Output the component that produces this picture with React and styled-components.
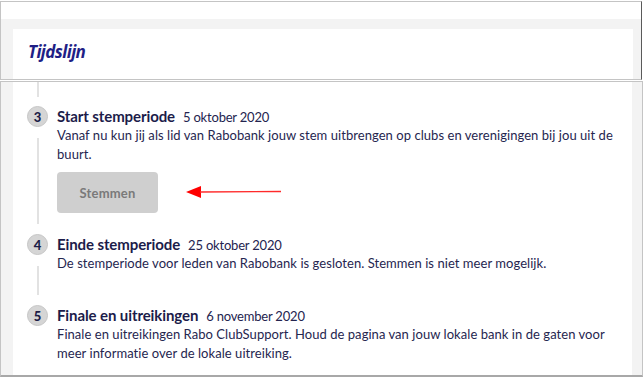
import styled, { createGlobalStyle } from "styled-components";

const GlobalStyle = createGlobalStyle`
  html, body {
    margin: 0;
    padding: 0;
    background: #ffffff;
  }
  body {
    font-family: Lato, "Open Sans", sans-serif;
    color: #24244f;
  }
`;

const steps = [
  {
    num: 3,
    title: "Start stemperiode",
    date: "5 oktober 2020",
    text: "Vanaf nu kun jij als lid van Rabobank jouw stem uitbrengen op clubs en verenigingen bij jou uit de buurt.",
    button: "Stemmen",
    spacing: 21,
  },
  {
    num: 4,
    title: "Einde stemperiode",
    date: "25 oktober 2020",
    text: "De stemperiode voor leden van Rabobank is gesloten. Stemmen is niet meer mogelijk.",
    spacing: 32,
  },
  {
    num: 5,
    title: "Finale en uitreikingen",
    date: "6 november 2020",
    text: "Finale en uitreikingen Rabo ClubSupport. Houd de pagina van jouw lokale bank in de gaten voor meer informatie over de lokale uitreiking.",
    spacing: 12,
    last: true,
  },
];

export default function App() {
  return (
    <>
      <GlobalStyle />
      <TopFrame>
        <WhiteStrip />
        <GreyArea>
          <HeaderCard>
            <Heading>Tijdslijn</Heading>
          </HeaderCard>
        </GreyArea>
      </TopFrame>
      <BottomFrame>
        <TimelineCard>
          <TopLine />
          {steps.map((step) => (
            <Step key={step.num} step={step} />
          ))}
        </TimelineCard>
      </BottomFrame>
    </>
  );
}

const Step = ({ step }) => {
  return (
    <StepRow>
      <Rail>
        <Badge>{step.num}</Badge>
        {!step.last && <RailLine />}
      </Rail>
      <StepBody $spacing={step.spacing}>
        <StepHead>
          <StepTitle>{step.title}</StepTitle>
          <StepDate>{step.date}</StepDate>
        </StepHead>
        <StepText>{step.text}</StepText>
        {step.button && (
          <ButtonRow>
            <VoteButton disabled>{step.button}</VoteButton>
            <Arrow width="96" height="14" viewBox="0 0 96 14">
              <path d="M0 7 L15 1 L15 13 Z" fill="#ff0000" />
              <line x1="14" y1="7" x2="95" y2="6.5" stroke="#ff2a2a" strokeWidth="1.4" />
            </Arrow>
          </ButtonRow>
        )}
      </StepBody>
    </StepRow>
  );
};

const TopFrame = styled.div`
  box-sizing: border-box;
  width: 642px;
  height: 79px;
  margin-top: 1px;
  border: 1px solid #c4c4c4;
  border-right: 1px solid #5a5a5a;
  display: flex;
  flex-direction: column;
  overflow: hidden;
`;

const WhiteStrip = styled.div`
  height: 17px;
  background: #ffffff;
`;

const GreyArea = styled.div`
  flex: 1;
  background: #f3f3f3;
  padding: 10px 8px 0 12px;
  display: flex;
`;

const HeaderCard = styled.div`
  flex: 1;
  background: #ffffff;
  padding: 12px 15px 0;
`;

const Heading = styled.h2`
  margin: 0;
  font-family: "Open Sans", Lato, sans-serif;
  font-size: 17px;
  line-height: 22px;
  font-style: italic;
  font-weight: 700;
  letter-spacing: -0.6px;
  color: #1f1f86;
`;

const BottomFrame = styled.div`
  box-sizing: border-box;
  width: 643px;
  margin-top: 1px;
  border: 1px solid #c4c4c4;
  border-bottom: 2px solid #a8a8a8;
  background: #f3f3f3;
  padding: 0 10px 0 12px;
  display: flex;
`;

const TimelineCard = styled.div`
  flex: 1;
  background: #ffffff;
  display: flex;
  flex-direction: column;
`;

const TopLine = styled.div`
  width: 2px;
  height: 15px;
  margin: 0 0 9px 24px;
  background: #e2e2e2;
`;

const StepRow = styled.div`
  display: flex;
`;

const Rail = styled.div`
  width: 21px;
  margin: 0 9px 0 14px;
  display: flex;
  flex-direction: column;
  align-items: center;
`;

const Badge = styled.div`
  box-sizing: border-box;
  width: 21px;
  height: 21px;
  flex-shrink: 0;
  border-radius: 50%;
  background: #d5d5d5;
  border: 1px solid #c6c6c6;
  display: flex;
  align-items: center;
  justify-content: center;
  font-size: 13px;
  font-weight: 900;
  color: #1d1d48;
`;

const RailLine = styled.div`
  flex: 1;
  width: 2px;
  margin: 11px 0 10px;
  background: #e2e2e2;
`;

const StepBody = styled.div`
  flex: 1;
  padding-bottom: ${(p) => p.$spacing}px;
  padding-right: 10px;
`;

const StepHead = styled.div`
  display: flex;
  align-items: baseline;
  gap: 8px;
  height: 20px;
  line-height: 20px;
`;

const StepTitle = styled.span`
  font-size: 15px;
  font-weight: 700;
  color: #1c1c4a;
  letter-spacing: -0.1px;
`;

const StepDate = styled.span`
  font-size: 13px;
  color: #24244f;
  letter-spacing: -0.2px;
`;

const StepText = styled.p`
  margin: 0;
  font-size: 13px;
  line-height: 19px;
  letter-spacing: 0.05px;
  color: #26264f;
`;

const ButtonRow = styled.div`
  display: flex;
  align-items: center;
  gap: 28px;
  margin-top: 8px;
`;

const VoteButton = styled.button`
  width: 101px;
  height: 41px;
  border: none;
  border-radius: 4px;
  background: #cfcfcf;
  font-family: Lato, sans-serif;
  font-size: 13px;
  font-weight: 700;
  color: #7a7a7a;
  letter-spacing: 0.2px;
`;

const Arrow = styled.svg`
  display: block;
  margin-top: -1px;
`;
